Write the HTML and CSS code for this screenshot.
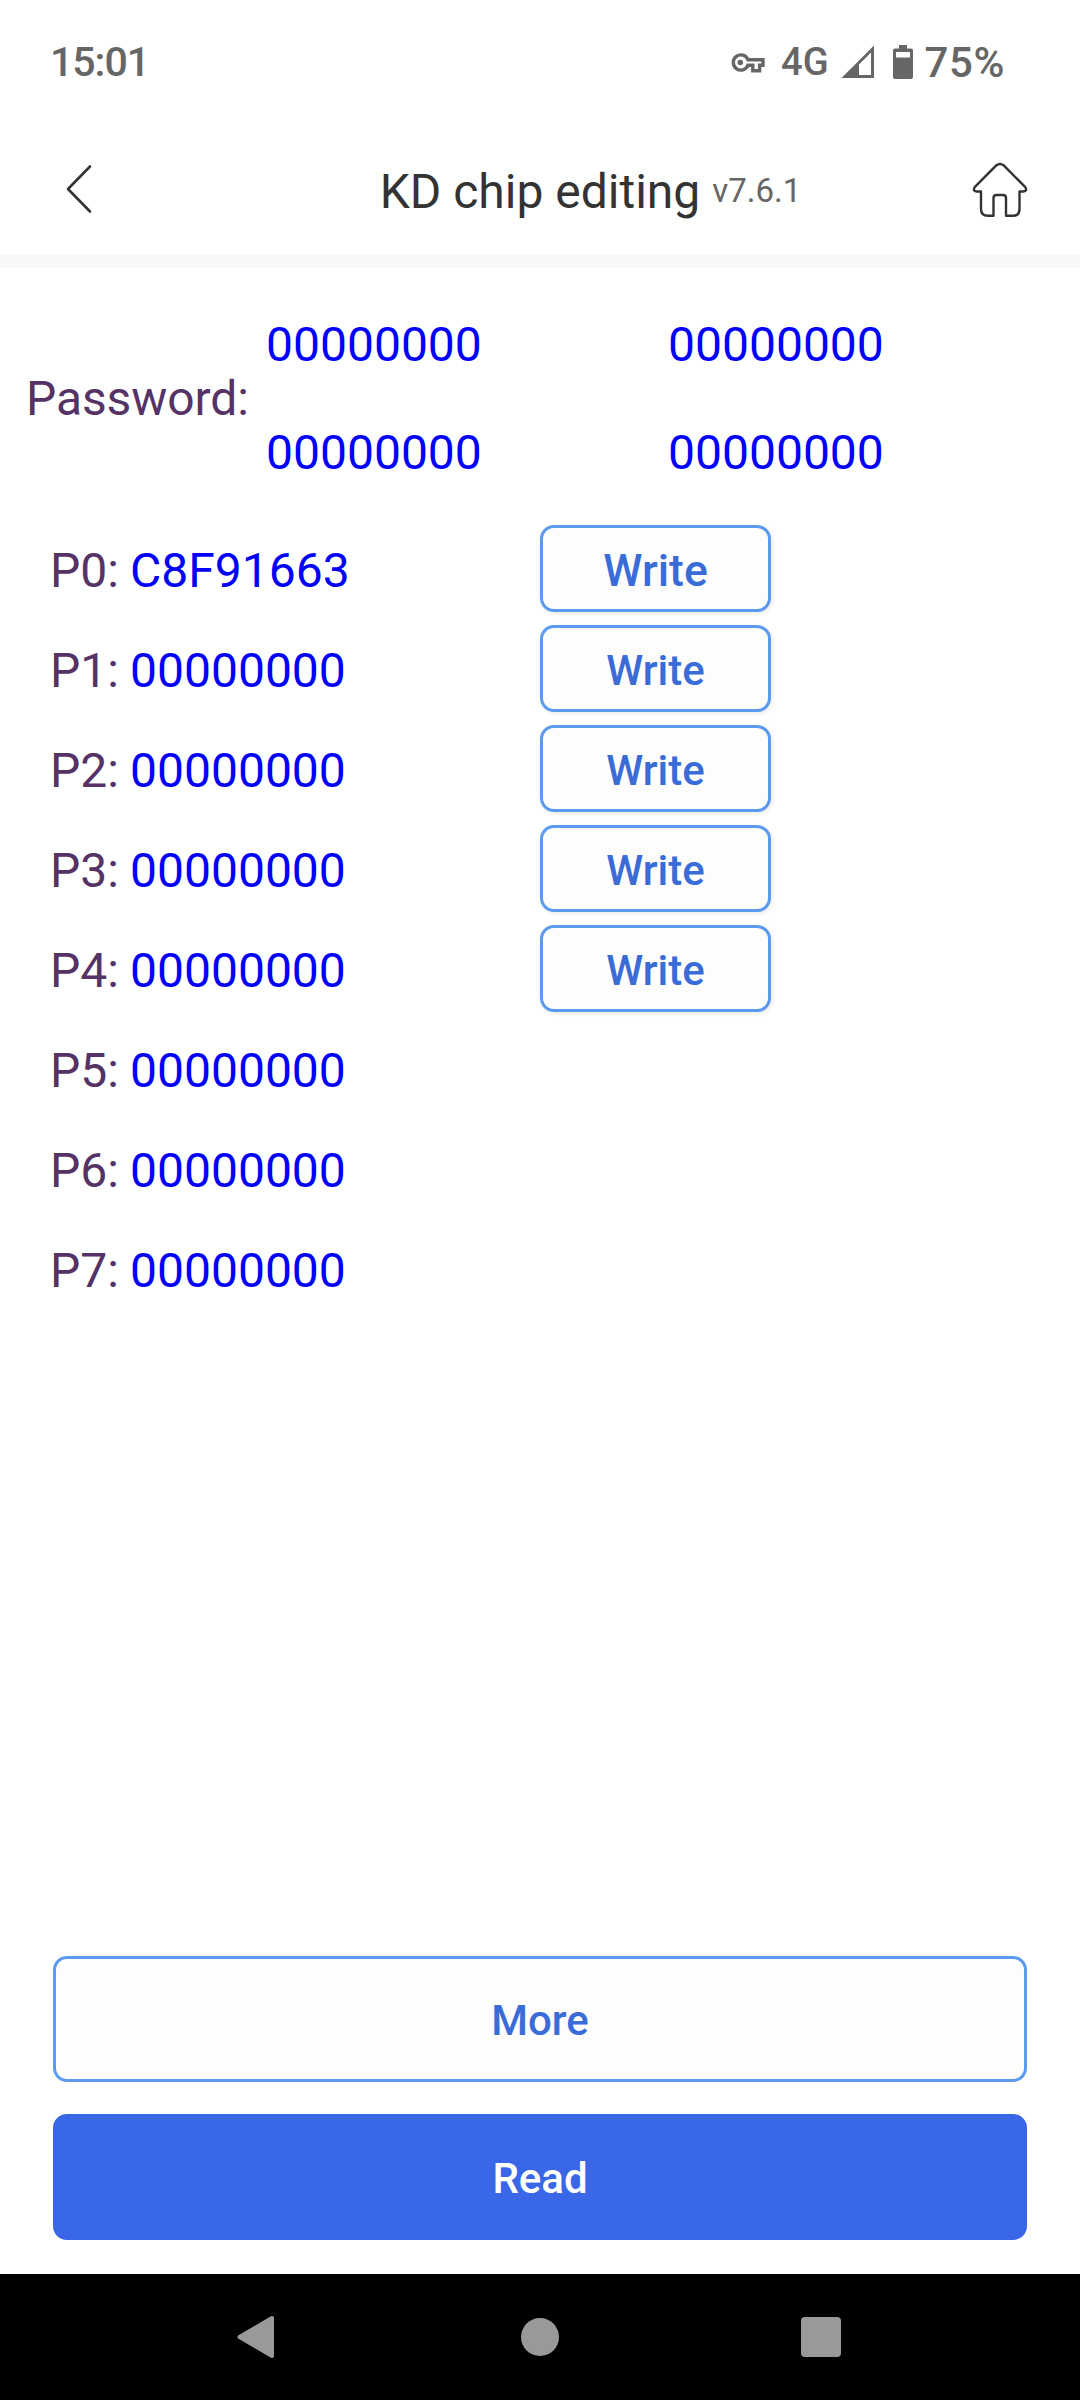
FILE: index.html
```html
<!DOCTYPE html>
<html lang="en">
<head>
    <meta charset="UTF-8">
    <meta name="viewport" content="width=device-width, initial-scale=1.0">
    <title>KD chip editing</title>
    <link rel="stylesheet" href="styles.css">
</head>
<body>

<div class="status-bar">
    <span class="clock">15:01</span>
    <div class="status-icons">
        <svg class="icon-key" width="34" height="20" viewBox="0 0 34 20">
            <path d="M17 6.8 A7.6 7.6 0 1 0 17 12.2 H21.8 V17.8 H28.6 V12.2 H32 V6.8 Z" fill="none" stroke="#666" stroke-width="3.4"/>
            <circle cx="9.3" cy="9.5" r="2.8" fill="#666"/>
        </svg>
        <span class="network">4G</span>
        <svg class="icon-signal" width="34" height="34" viewBox="0 0 34 34">
            <path d="M0.5 33 L33 0.5 V33 Z M18 30 H30 V7.5 L18 19.5 Z" fill="#666" fill-rule="evenodd"/>
        </svg>
        <svg class="icon-battery" width="20" height="34" viewBox="0 0 20 34">
            <path d="M6 0 H14 V3.5 H18 Q20 3.5 20 5.5 V32 Q20 34 18 34 H2 Q0 34 0 32 V5.5 Q0 3.5 2 3.5 H6 Z M3 7 V12.5 H17 V7 Z" fill="#666" fill-rule="evenodd"/>
        </svg>
        <span class="percent">75%</span>
    </div>
</div>

<div class="header">
    <svg class="icon-back" width="28" height="50" viewBox="0 0 28 50">
        <path d="M25 2.5 L3 25 L25 47.5" fill="none" stroke="#333" stroke-width="2.6" stroke-linecap="round" stroke-linejoin="round"/>
    </svg>
    <h1>KD chip editing</h1>
    <div class="header-right">
        <span class="version">v7.6.1</span>
        <svg class="icon-home" width="56" height="56" viewBox="0 0 56 56">
            <path d="M24.5 3.2 Q28 0.6 31.5 3.2 L53.3 25.2 Q55.5 29.3 51.5 29.5 H47.5 V47 Q47.5 53.8 41 53.8 H34 V36 Q34 33 31 33 H24.5 Q21.5 33 21.5 36 V53.8 H16 Q9 53.8 9 47 V29.5 H4.5 Q0.5 29.3 2.7 25.2 Z" fill="none" stroke="#333" stroke-width="2.4" stroke-linejoin="round"/>
        </svg>
    </div>
</div>

<div class="content">
    <div class="password">
        <span class="label">Password:</span>
        <div class="password-values">
            <span>00000000</span>
            <span>00000000</span>
            <span>00000000</span>
            <span>00000000</span>
        </div>
    </div>

    <div class="pages">
        <div class="page-row"><span class="label">P0:</span><span class="value">C8F91663</span><button class="write large">Write</button></div>
        <div class="page-row"><span class="label">P1:</span><span class="value">00000000</span><button class="write">Write</button></div>
        <div class="page-row"><span class="label">P2:</span><span class="value">00000000</span><button class="write">Write</button></div>
        <div class="page-row"><span class="label">P3:</span><span class="value">00000000</span><button class="write">Write</button></div>
        <div class="page-row"><span class="label">P4:</span><span class="value">00000000</span><button class="write">Write</button></div>
        <div class="page-row"><span class="label">P5:</span><span class="value">00000000</span></div>
        <div class="page-row"><span class="label">P6:</span><span class="value">00000000</span></div>
        <div class="page-row"><span class="label">P7:</span><span class="value">00000000</span></div>
    </div>
</div>

<div class="actions">
    <button class="more">More</button>
    <button class="read">Read</button>
</div>

<div class="nav-bar">
    <svg width="38" height="44" viewBox="0 0 38 44">
        <path d="M2.5 22 L35 3 V41 Z" fill="#999" stroke="#999" stroke-width="4" stroke-linejoin="round"/>
    </svg>
    <svg width="38" height="38" viewBox="0 0 38 38">
        <circle cx="19" cy="19" r="19" fill="#999"/>
    </svg>
    <svg width="40" height="40" viewBox="0 0 40 40">
        <rect width="40" height="40" rx="4" fill="#999"/>
    </svg>
</div>

</body>
</html>
```

FILE: styles.css
```css
* {
    box-sizing: border-box;
}
body {
    font-family: Roboto, sans-serif;
    background-color: #fff;
    margin: 0;
    min-height: 2400px;
    display: flex;
    flex-direction: column;
}
svg {
    display: block;
    flex: none;
}
.status-bar {
    display: flex;
    justify-content: space-between;
    align-items: center;
    height: 124px;
    padding: 0 75px 0 50px;
    color: #666;
    font-weight: 500;
    font-size: 41px;
}
.clock {
    letter-spacing: -1px;
}
.status-icons {
    display: flex;
    align-items: center;
}
.icon-key {
    margin-top: 2px;
}
.network {
    font-size: 38px;
    margin-left: 16px;
}
.percent {
    font-size: 42px;
    letter-spacing: 0.6px;
}
.icon-signal {
    margin-left: 12px;
}
.icon-battery {
    margin: 0 12px 0 18px;
}
.header {
    display: grid;
    grid-template-columns: 1fr auto 1fr;
    align-items: center;
    height: 144px;
    padding: 0 52px;
    border-bottom: 13px solid #f7f7f7;
}
.header .icon-back {
    margin: 0 0 2px 13px;
}
.header h1 {
    margin: 0;
    padding-top: 4px;
    font-size: 48px;
    font-weight: 400;
    color: #333;
}
.header-right {
    display: flex;
    justify-content: space-between;
    align-items: center;
    padding-left: 12px;
}
.version {
    padding-top: 2px;
    font-size: 33px;
    color: #666;
}
.content {
    flex: 1;
    padding-top: 22px;
    font-size: 48px;
}
.label {
    color: #553366;
}
.password {
    display: flex;
    align-items: center;
    padding-left: 26px;
    margin-bottom: 15px;
}
.password .label {
    width: 240px;
    letter-spacing: -0.1px;
}
.password-values {
    display: grid;
    grid-template-columns: 402px 402px;
    grid-auto-rows: 108px;
    align-items: center;
    color: #0000fa;
}
.page-row {
    display: flex;
    height: 100px;
    line-height: 100px;
    padding-left: 50px;
}
.page-row .label {
    width: 80px;
}
.page-row .value {
    width: 410px;
    color: #0000fa;
}
button {
    font-family: inherit;
    font-size: 42px;
    font-weight: 500;
    color: #3a6cd8;
    background-color: #fdfdfd;
    border: 3px solid #5c9af0;
    border-radius: 14px;
    padding: 4px 0 0;
}
.write {
    width: 231px;
    height: 87px;
    margin-top: 4px;
    box-shadow: 2px 2px 4px rgba(0, 0, 0, 0.08);
}
.write.large {
    font-size: 44.5px;
}
.actions {
    display: flex;
    flex-direction: column;
    gap: 32px;
    padding: 0 53px 34px;
}
.actions button {
    height: 126px;
    padding-top: 2px;
}
.actions .read {
    background-color: #3a67e8;
    border-color: #3a67e8;
    color: #fff;
}
.nav-bar {
    display: flex;
    justify-content: space-between;
    align-items: center;
    height: 126px;
    padding: 0 239px 0 237px;
    background-color: #000;
}
.nav-bar svg:nth-child(2) {
    margin-left: 4px;
}
```
